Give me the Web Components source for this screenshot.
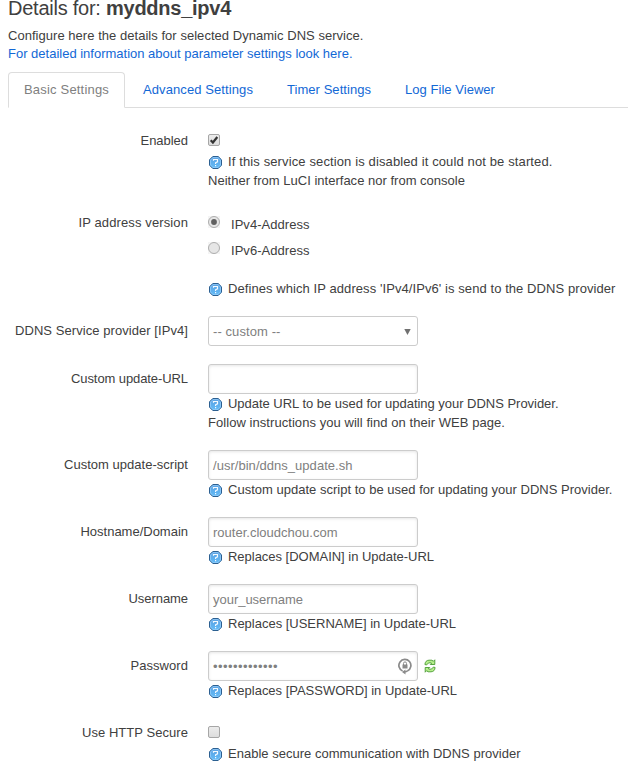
<!DOCTYPE html>
<html lang="en"><head><meta charset="utf-8"><title>Dynamic DNS</title>
<style>
body{margin:0;background:#fff;color:#404040;font:13px/19px "Liberation Sans",Arial,sans-serif;height:766px;overflow:hidden}
</style></head><body>
<ddns-page></ddns-page>
<script>
const define=(name,html,init)=>customElements.define(name,class extends HTMLElement{
  connectedCallback(){
    if(this.shadowRoot)return;
    this.attachShadow({mode:'open'}).innerHTML=html;
    if(init)init(this,this.shadowRoot);
  }
});
/* A single run of text whose tracking is tuned to an advance width. */
define('fit-text','<style>:host{display:inline-block;white-space:pre;vertical-align:top}</style><span><slot></slot></span>',(el,r)=>{
  const w=+el.getAttribute('w');if(!w)return;
  const n=el.textContent.length;
  el.style.letterSpacing=((w-r.querySelector('span').getBoundingClientRect().width)/n)+'px';
});
define('help-icon',`<style>:host{display:block;width:13px;height:13px}svg{display:block}</style>
<svg width="13" height="13" viewBox="0 0 13 13"><defs><linearGradient id="g" x2="0" y2="1"><stop stop-color="#5b9fe0"/><stop offset="1" stop-color="#62bcf8"/></linearGradient></defs>
<path d="M3.800.5h5.400l3.300 3.300v5.400l-3.300 3.300H3.800L.5 9.200V3.800z" fill="url(#g)" stroke="#2c5f90"/><path d="M4.100 1.500h4.800l2.600 2.600v4.800l-2.600 2.600H4.100L1.500 8.900V4.100z" fill="none" stroke="#9bd0fa" stroke-width=".7"/>
<path d="M4.500 4.700V3.500h4v2.400L6.600 6.800v1.100M6.600 9v1.300" fill="none" stroke="#f4faff" stroke-width="1.200"/></svg>`);
define('help-text',`<style>:host{display:block}.l{display:flex;gap:6px;padding-left:1px;height:19px}help-icon{margin-top:4px}</style>
<div class="l"><help-icon></help-icon><slot></slot></div><slot name="more"></slot>`);
define('form-row',`<style>:host{display:grid;grid-template-columns:188px 1fr;column-gap:20px;margin-bottom:18px}
.label{text-align:right;padding-top:5px;height:19px}</style><div class="label"><slot name="label"></slot></div><div><slot></slot></div>`);
define('text-box',`<style>:host{display:flex;align-items:center;box-sizing:border-box;width:210px;height:30px;padding:1px 5px 0 4px;border:1px solid #ccc;border-radius:3px;color:#808080;box-shadow:inset 0 1px 3px rgba(0,0,0,.1)}
:host([plain]){box-shadow:none}::slotted(svg){margin-left:auto}</style><slot></slot>`);
define('check-box',`<style>:host{display:block;padding:8px 0 6px;height:12px}svg{display:block}.tick{display:none}:host([checked]) .tick{display:block}</style>
<svg width="12" height="12" viewBox="0 0 12 12"><defs><linearGradient id="b" x2="0" y2="1"><stop stop-color="#ededed"/><stop offset="1" stop-color="#dcdcdc"/></linearGradient></defs><rect x=".5" y=".5" width="11" height="11" rx="1.500" fill="url(#b)" stroke="#a6a6a6"/><path class="tick" d="M2.700 6.300l2.200 2.200L9.300 3" fill="none" stroke="#333" stroke-width="2.200"/></svg>`);
define('radio-item',`<style>:host{display:flex;gap:11px;height:26px;line-height:19px}svg{display:block;background:#f4f4f4}.dot{display:none}:host([checked]) .dot{display:block}::slotted(*){margin-top:-1px}</style>
<svg width="12" height="12" viewBox="0 0 12 12"><circle cx="6" cy="6" r="5.500" fill="#e6e6e6" stroke="#adadad"/><circle class="dot" cx="6" cy="6" r="2.900" fill="#606060"/></svg><slot></slot>`);
define('tab-item',`<style>:host{display:block;box-sizing:border-box;height:36px;padding:7px 15px 0;border:1px solid transparent;color:#1268d6}
:host([active]){border-color:#ddd;border-bottom-color:#fff;border-radius:4px 4px 0 0;background:#fff;color:#808080}</style><slot></slot>`);
define('tab-bar',`<style>:host{display:flex;gap:2px;height:35px;margin:9px 0 18px 8px;border-bottom:1px solid #ddd}</style><slot></slot>`);
define('page-head',`<style>:host{display:block;padding-left:8px}h2{margin:0;font-size:20px;line-height:16px;height:16px;padding-bottom:11px;font-weight:400;display:flex}.d{display:block;height:18px;line-height:17px}.a{color:#1268d6}</style>
<h2><fit-text w="98">Details for: </fit-text><b><fit-text w="125">myddns_ipv4</fit-text></b></h2>
<div class="d"><fit-text w="355.500">Configure here the details for selected Dynamic DNS service.</fit-text></div>
<div class="d a"><fit-text w="344.500">For detailed information about parameter settings look here.</fit-text></div>`);
define('ddns-page',`<style>:host{display:block}.radios{padding-top:8px;height:63px}.pw{display:flex;align-items:center;gap:6px}.arrow{margin-left:auto;margin-right:1px}</style>
<page-head></page-head>
<tab-bar><tab-item active><fit-text w="85">Basic Settings</fit-text></tab-item><tab-item><fit-text w="110">Advanced Settings</fit-text></tab-item><tab-item><fit-text w="84">Timer Settings</fit-text></tab-item><tab-item><fit-text w="90">Log File Viewer</fit-text></tab-item></tab-bar>
<form-row><fit-text slot="label" w="47.500">Enabled</fit-text><check-box checked></check-box><help-text><fit-text w="324.500">If this service section is disabled it could not be started.</fit-text><fit-text slot="more" w="257">Neither from LuCI interface nor from console</fit-text></help-text></form-row>
<form-row><fit-text slot="label" w="109.500">IP address version</fit-text><div class="radios"><radio-item checked><fit-text w="78.500">IPv4-Address</fit-text></radio-item><radio-item><fit-text w="78.500">IPv6-Address</fit-text></radio-item></div><help-text><fit-text w="387.500">Defines which IP address 'IPv4/IPv6' is send to the DDNS provider</fit-text></help-text></form-row>
<form-row><fit-text slot="label" w="173">DDNS Service provider [IPv4]</fit-text><text-box plain><fit-text w="67.500">-- custom --</fit-text><svg class="arrow" width="7" height="6" viewBox="0 0 7 6"><path d="M.3 0h6.400L3.500 6z" fill="#707070"/></svg></text-box></form-row>
<form-row><fit-text slot="label" w="117">Custom update-URL</fit-text><text-box></text-box><help-text><fit-text w="330.500">Update URL to be used for updating your DDNS Provider.</fit-text><fit-text slot="more" w="297">Follow instructions you will find on their WEB page.</fit-text></help-text></form-row>
<form-row><fit-text slot="label" w="124">Custom update-script</fit-text><text-box><fit-text w="139.500">/usr/bin/ddns_update.sh</fit-text></text-box><help-text><fit-text w="384.500">Custom update script to be used for updating your DDNS Provider.</fit-text></help-text></form-row>
<form-row><fit-text slot="label" w="107.500">Hostname/Domain</fit-text><text-box><fit-text w="124.500">router.cloudchou.com</fit-text></text-box><help-text><fit-text w="206">Replaces [DOMAIN] in Update-URL</fit-text></help-text></form-row>
<form-row><fit-text slot="label" w="59.500">Username</fit-text><text-box><fit-text w="90">your_username</fit-text></text-box><help-text><fit-text w="228">Replaces [USERNAME] in Update-URL</fit-text></help-text></form-row>
<form-row><fit-text slot="label" w="57.500">Password</fit-text><div class="pw"><text-box><fit-text w="65">•••••••••••••</fit-text>
<svg width="14" height="17" viewBox="0 0 14 17"><path d="M4.600 13A6 6 0 1 1 9.600 12.800M9.600 12.800Q8.500 14 6.200 14" fill="none" stroke="#8a8a8a" stroke-width="1.700"/><path d="M7.500 11.500v5L4 14z" fill="#8a8a8a"/><path d="M4.500 6.500h5v4h-5z" fill="#8a8a8a"/><path d="M5.500 7V5.400a1.500 1.500 0 0 1 3 0V7" fill="none" stroke="#8a8a8a"/></svg></text-box>
<svg width="12" height="14" viewBox="0 0 12 14"><path d="M.9 5.500Q1.300 1.300 5 1.200H8L9.300 2.300 10.800.8V5.500H6.300L7.600 4.200Q6 3.300 4.300 4.100L2.500 6z" fill="#b6ef8c" stroke="#4a9a33" stroke-width=".9"/><path d="M11.100 8.500Q10.700 12.700 7 12.800H4L2.700 11.700 1.200 13.200V8.500H5.700L4.400 9.800Q6 10.700 7.700 9.900L9.500 8z" fill="#b6ef8c" stroke="#4a9a33" stroke-width=".9"/></svg></div><help-text><fit-text w="229">Replaces [PASSWORD] in Update-URL</fit-text></help-text></form-row>
<form-row><fit-text slot="label" w="106">Use HTTP Secure</fit-text><check-box></check-box><help-text><fit-text w="292.500">Enable secure communication with DDNS provider</fit-text></help-text></form-row>`);
</script></body></html>
